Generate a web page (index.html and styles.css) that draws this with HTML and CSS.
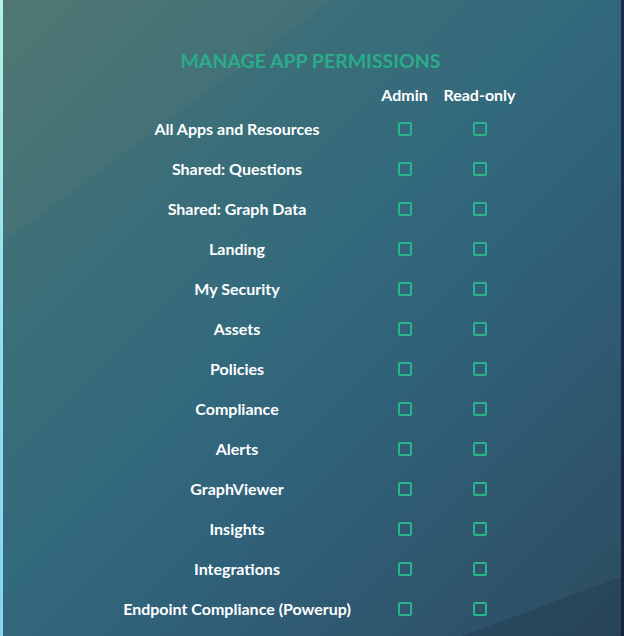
FILE: index.html
```html
<!DOCTYPE html>
<html>
<head>
<meta charset="utf-8">
<link rel="stylesheet" href="styles.css">
</head>
<body>
<div class="screen">
  <div class="strip-left"></div>
  <main class="panel">
    <h1 class="title">MANAGE APP PERMISSIONS</h1>
    <div class="perm-grid">
      <div class="head"></div>
      <div class="head">Admin</div>
      <div class="head">Read-only</div>

      <div class="label">All Apps and Resources</div><div class="cell"><span class="box"></span></div><div class="cell"><span class="box"></span></div>
      <div class="label">Shared: Questions</div><div class="cell"><span class="box"></span></div><div class="cell"><span class="box"></span></div>
      <div class="label">Shared: Graph Data</div><div class="cell"><span class="box"></span></div><div class="cell"><span class="box"></span></div>
      <div class="label">Landing</div><div class="cell"><span class="box"></span></div><div class="cell"><span class="box"></span></div>
      <div class="label">My Security</div><div class="cell"><span class="box"></span></div><div class="cell"><span class="box"></span></div>
      <div class="label">Assets</div><div class="cell"><span class="box"></span></div><div class="cell"><span class="box"></span></div>
      <div class="label">Policies</div><div class="cell"><span class="box"></span></div><div class="cell"><span class="box"></span></div>
      <div class="label">Compliance</div><div class="cell"><span class="box"></span></div><div class="cell"><span class="box"></span></div>
      <div class="label">Alerts</div><div class="cell"><span class="box"></span></div><div class="cell"><span class="box"></span></div>
      <div class="label">GraphViewer</div><div class="cell"><span class="box"></span></div><div class="cell"><span class="box"></span></div>
      <div class="label">Insights</div><div class="cell"><span class="box"></span></div><div class="cell"><span class="box"></span></div>
      <div class="label">Integrations</div><div class="cell"><span class="box"></span></div><div class="cell"><span class="box"></span></div>
      <div class="label">Endpoint Compliance (Powerup)</div><div class="cell"><span class="box"></span></div><div class="cell"><span class="box"></span></div>
    </div>
  </main>
  <div class="strip-right"></div>
</div>
</body>
</html>
```
FILE: styles.css
```css
html, body {
  margin: 0;
  padding: 0;
  height: 100%;
}
body {
  font-family: Lato, "Open Sans", sans-serif;
  overflow: hidden;
}
.screen {
  display: flex;
  width: 624px;
  height: 636px;
}
.strip-left {
  width: 3px;
  flex: none;
  background: linear-gradient(to bottom, #b6f2e2 0%, #96e4ee 40%, #86d4ee 100%);
}
.strip-right {
  width: 3px;
  flex: none;
  background: linear-gradient(to bottom, #1a2b4f, #16233f);
}
.panel {
  flex: 1;
  background:
    linear-gradient(159.6deg, rgba(0,0,0,0) 756px, rgba(20,36,60,0.22) 756px),
    linear-gradient(143.7deg, rgba(150,140,110,0.08) 195px, rgba(0,0,0,0) 195px),
    linear-gradient(135deg, #4a7574 0%, #3c6f78 25%, #336a7c 45%, #30617a 62%, #2d4c60 100%);
  padding-top: 49px;
  box-sizing: border-box;
}
.title {
  margin: 0 0 0 -3px;
  text-align: center;
  font-size: 19.5px;
  line-height: 24px;
  font-weight: 700;
  color: #2aac8a;
}
.perm-grid {
  display: grid;
  grid-template-columns: 247px 75px 75px;
  margin-top: 12px;
  margin-left: 117px;
}
.head {
  height: 23px;
  line-height: 20px;
  text-align: center;
  color: #ffffff;
  font-size: 16px;
  font-weight: 700;
}
.label, .cell {
  height: 40px;
  display: flex;
  align-items: center;
  justify-content: center;
  color: #ffffff;
  font-size: 16px;
  font-weight: 700;
  white-space: nowrap;
}
.label {
  padding-right: 13px;
}
.box {
  width: 10px;
  height: 10px;
  margin-top: 2px;
  border: 2px solid #2bb38c;
  border-radius: 2px;
}
```
